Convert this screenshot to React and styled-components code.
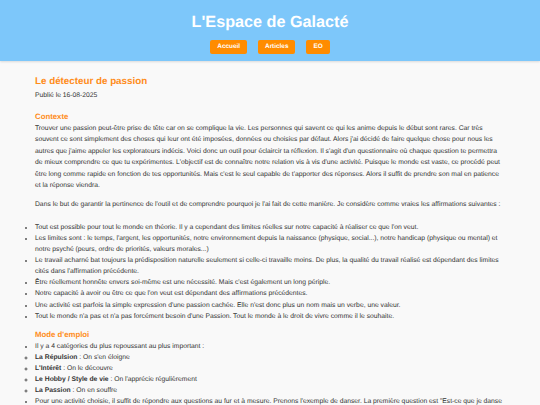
import React from 'react';
import styled, { createGlobalStyle } from 'styled-components';

const GlobalStyle = createGlobalStyle`
  html, body {
    margin: 0;
    padding: 0;
    background: #f9f9f9;
    font-family: "Liberation Sans", Arial, sans-serif;
    color: #333;
    text-rendering: geometricPrecision;
  }
`;

const Header = styled.header`
  background: #7dc7fa;
  height: 61px;
  box-sizing: border-box;
  padding-top: 13px;
  text-align: center;
  box-shadow: 0 1px 2px rgba(0, 0, 0, 0.12);
`;

const SiteTitle = styled.h1`
  margin: 0;
  color: #fff;
  font-size: 16.2px;
  line-height: 19px;
  font-weight: bold;
`;

const Nav = styled.nav`
  display: flex;
  justify-content: center;
  gap: 11px;
  margin-top: 8px;
`;

const NavButton = styled.a`
  display: block;
  background: #ff8c00;
  color: #fff;
  font-size: 6.4px;
  font-weight: bold;
  line-height: 13.5px;
  padding: 0 7px;
  border-radius: 2px;
  text-decoration: none;
`;

const Main = styled.main`
  padding: 14px 35px 0;
  font-size: 6.75px;
  line-height: 11.4px;
`;

const Title = styled.h2`
  margin: 0;
  color: #ff8c1a;
  font-size: 9.8px;
  line-height: 14px;
  font-weight: bold;
`;

const Meta = styled.p`
  margin: 0 0 9px;
  line-height: 13px;
`;

const Section = styled.h3`
  margin: 0;
  color: #ff8c1a;
  font-size: 7.8px;
  line-height: 12px;
  font-weight: bold;
`;

const Para = styled.p`
  margin: 0 0 ${p => p.$gap || 8}px;
`;

const List = styled.ul`
  margin: 0 0 ${p => p.$gap || 0}px;
  padding: 0;
  line-height: 11.1px;
  list-style: ${p => (p.$sub ? 'circle' : 'disc')};

  li::marker {
    color: #555;
  }
`;

const Wrap = styled.li`
  list-style: none;
`;

export default function App() {
  return (
    <>
      <GlobalStyle />
      <Header>
        <SiteTitle>L'Espace de Galacté</SiteTitle>
        <Nav>
          <NavButton href="#">Accueil</NavButton>
          <NavButton href="#">Articles</NavButton>
          <NavButton href="#">EO</NavButton>
        </Nav>
      </Header>
      <Main>
        <Title>Le détecteur de passion</Title>
        <Meta>Publié le 16-08-2025</Meta>
        <Section>Contexte</Section>
        <Para>
          Trouver une passion peut-être prise de tête car on se complique la vie. Les personnes qui savent ce qui les anime depuis le début sont rares. Car très souvent ce sont simplement des choses qui leur ont été imposées, données ou choisies par défaut. Alors j'ai décidé de faire quelque chose pour nous les autres que j'aime appeler les explorateurs indécis. Voici donc un outil pour éclaircir ta réflexion. Il s'agit d'un questionnaire où chaque question te permettra de mieux comprendre ce que tu expérimentes. L'objectif est de connaître notre relation vis à vis d'une activité. Puisque le monde est vaste, ce procédé peut être long comme rapide en fonction de tes opportunités. Mais c'est le seul capable de t'apporter des réponses. Alors il suffit de prendre son mal en patience et la réponse viendra.
        </Para>
        <Para $gap={11}>
          Dans le but de garantir la pertinence de l'outil et de comprendre pourquoi je l'ai fait de cette manière. Je considère comme vraies les affirmations suivantes :
        </Para>
        <List $gap={7}>
          <li>Tout est possible pour tout le monde en théorie. Il y a cependant des limites réelles sur notre capacité à réaliser ce que l'on veut.</li>
          <li>Les limites sont : le temps, l'argent, les opportunités, notre environnement depuis la naissance (physique, social...), notre handicap (physique ou mental) et notre psyché (peurs, ordre de priorités, valeurs morales...)</li>
          <li>Le travail acharné bat toujours la prédisposition naturelle seulement si celle-ci travaille moins. De plus, la qualité du travail réalisé est dépendant des limites cités dans l'affirmation précédente.</li>
          <li>Être réellement honnête envers soi-même est une nécessité. Mais c'est également un long périple.</li>
          <li>Notre capacité à avoir ou être ce que l'on veut est dépendant des affirmations précédentes.</li>
          <li>Une activité est parfois la simple expression d'une passion cachée. Elle n'est donc plus un nom mais un verbe, une valeur.</li>
          <li>Tout le monde n'a pas et n'a pas forcément besoin d'une Passion. Tout le monde à le droit de vivre comme il le souhaite.</li>
        </List>
        <Section>Mode d'emploi</Section>
        <List>
          <li>Il y a 4 catégories du plus repoussant au plus important :</li>
          <Wrap>
            <List $sub>
              <li><b>La Répulsion</b> : On s'en éloigne</li>
              <li><b>L'Intérêt</b> : On le découvre</li>
              <li><b>Le Hobby / Style de vie</b> : On l'apprécie régulièrement</li>
              <li><b>La Passion</b> : On en souffre</li>
            </List>
          </Wrap>
          <li>Pour une activité choisie, il suffit de répondre aux questions au fur et à mesure. Prenons l'exemple de danser. La première question est "Est-ce que je danse ?"</li>
        </List>
      </Main>
    </>
  );
}
